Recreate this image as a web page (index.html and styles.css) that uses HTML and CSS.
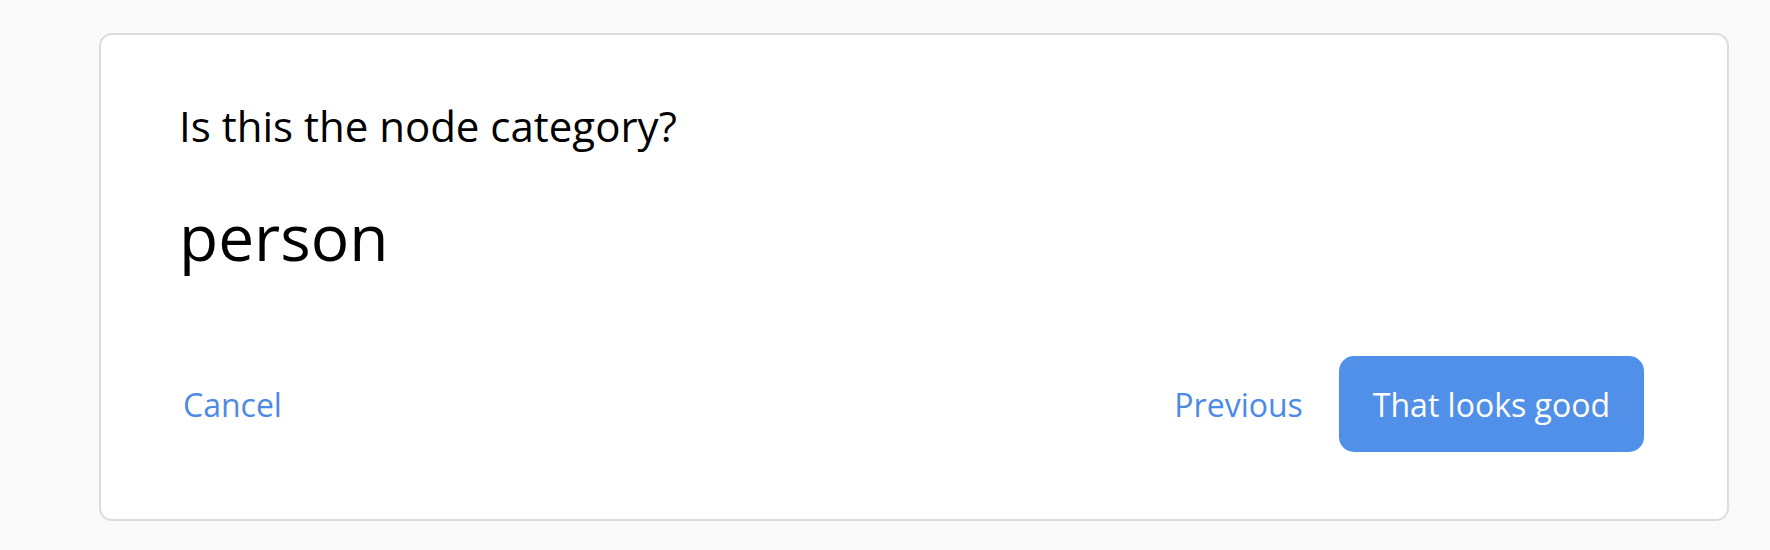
FILE: index.html
```html
<!DOCTYPE html>
<html lang="en">
<head>
<meta charset="utf-8">
<title>Node category</title>
<link rel="stylesheet" href="styles.css">
</head>
<body>
<div class="page">
  <section class="card">
    <h2 class="question">Is this the node category?</h2>
    <p class="answer">person</p>
    <div class="actions">
      <button class="link-btn">Cancel</button>
      <div class="actions-right">
        <button class="link-btn">Previous</button>
        <button class="primary-btn">That looks good</button>
      </div>
    </div>
  </section>
</div>
</body>
</html>
```

FILE: styles.css
```css
html, body {
  margin: 0;
  padding: 0;
  background: #fafafa;
}

body {
  font-family: "Open Sans", "Noto Sans", sans-serif;
  color: #000;
}

.page {
  padding: 33px 41px 0 99px;
}

.card {
  box-sizing: border-box;
  height: 488px;
  background: #fff;
  border: 2px solid #dcdcdc;
  border-radius: 13px;
  padding: 62px 83px 0 78px;
}

.question {
  margin: 0;
  font-size: 42px;
  font-weight: 400;
  line-height: normal;
}

.answer {
  margin: 39px 0 0;
  font-size: 64px;
  font-weight: 400;
  line-height: normal;
}

.actions {
  margin-top: 76px;
  display: flex;
  align-items: center;
  justify-content: space-between;
}

.actions-right {
  display: flex;
  align-items: center;
  gap: 32px;
}

.link-btn {
  font-family: inherit;
  font-size: 32px;
  line-height: normal;
  color: #4c8ae6;
  background: none;
  border: 0;
  padding: 0 4px;
  cursor: pointer;
}

.primary-btn {
  font-family: inherit;
  font-size: 32px;
  line-height: normal;
  color: #fff;
  background: #5190e8;
  border: 0;
  border-radius: 15px;
  height: 96px;
  padding: 0 34px;
  display: inline-flex;
  align-items: center;
  cursor: pointer;
}
```
